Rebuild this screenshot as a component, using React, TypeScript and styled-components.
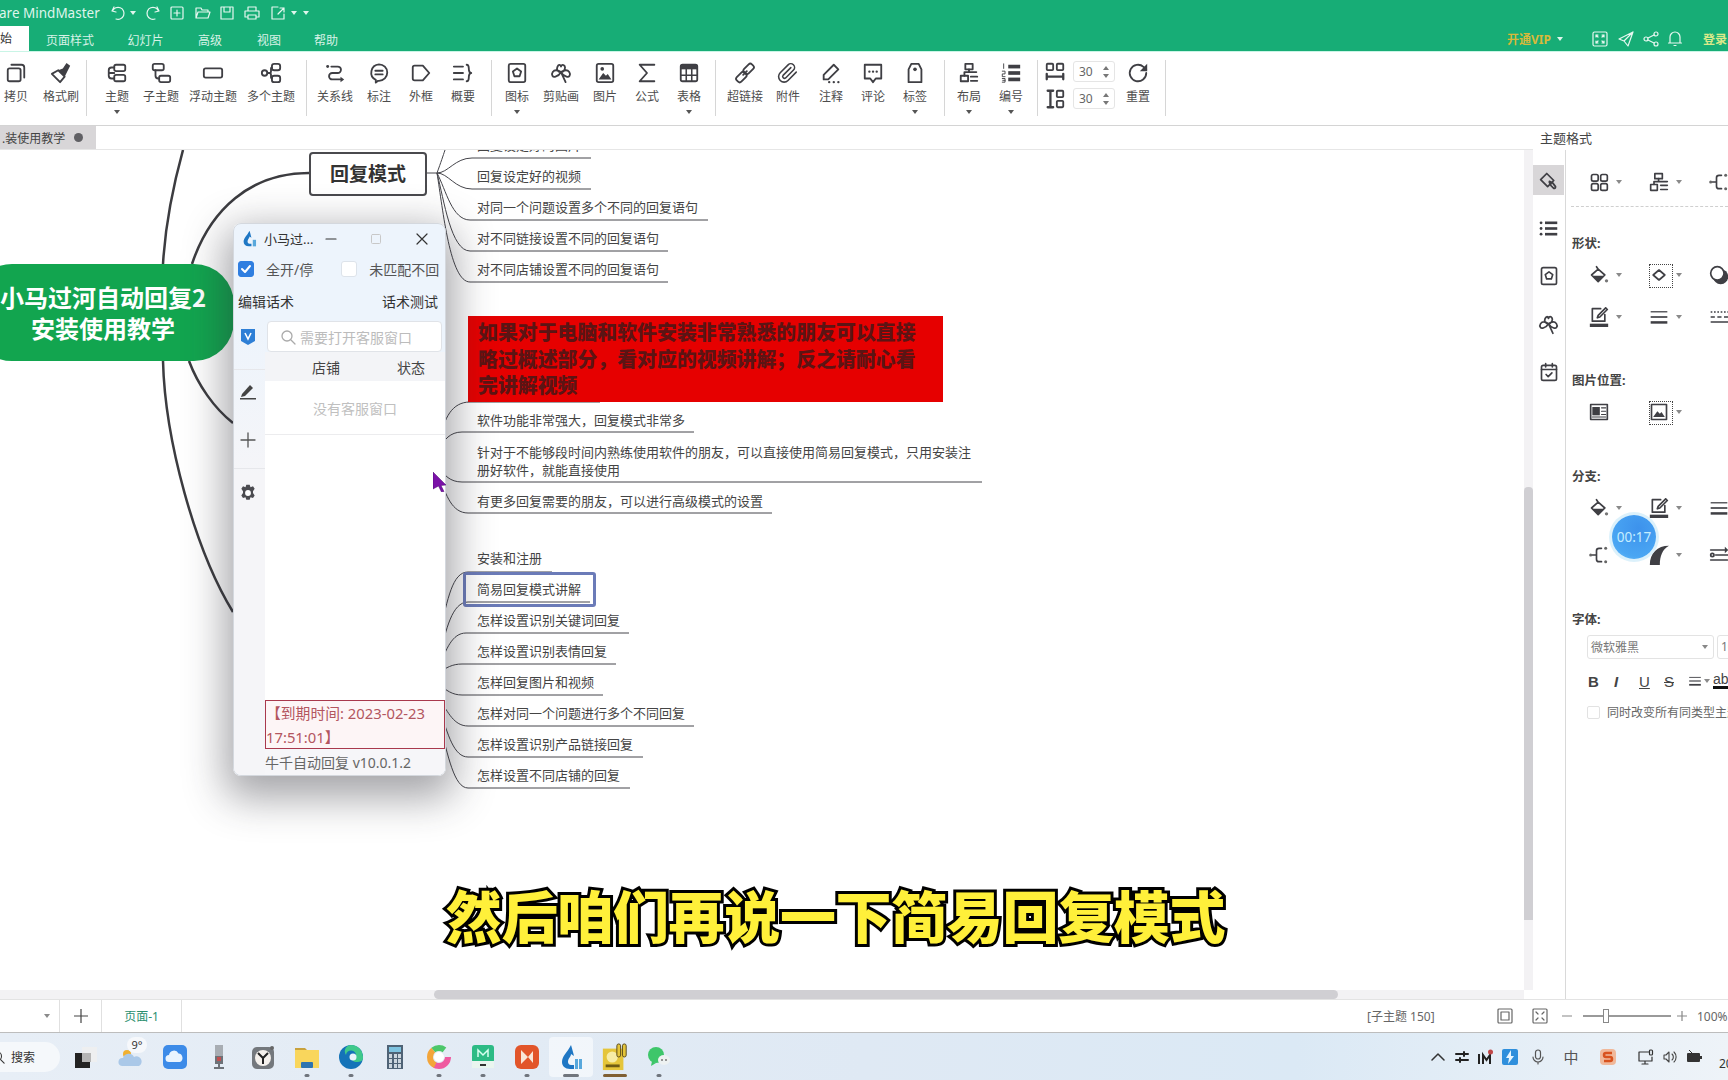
import React from "react";
import styled, { createGlobalStyle } from "styled-components";

const FONT = `"Noto Sans", "Noto Sans CJK SC", sans-serif`;
const INK = "#3f3f44";

const Global = createGlobalStyle`
  html, body { margin: 0; padding: 0; background: #fff; overflow: hidden; }
  * { box-sizing: border-box; }
  body { font-family: ${FONT}; }
`;

const Page = styled.div`
  width: 1728px; height: 1080px; display: flex; flex-direction: column; overflow: hidden; background: #fff;
`;

/* ------- icons ------- */
const Glyph = styled.svg<{ $s?: number; $c?: string; $w?: number }>`
  width: ${(p) => p.$s ?? 22}px; height: ${(p) => p.$s ?? 22}px; flex: none; display: block;
  fill: none; stroke: ${(p) => p.$c ?? INK}; stroke-width: ${(p) => p.$w ?? 2};
  stroke-linecap: round; stroke-linejoin: round;
`;
type IconProps = { s?: number; c?: string; w?: number };
const mk = (body: React.ReactNode) => ({ s, c, w }: IconProps) => (
  <Glyph viewBox="0 0 24 24" $s={s} $c={c} $w={w}>{body}</Glyph>
);
const Solid = styled.g<{ $c?: string }>`fill: ${(p) => p.$c ?? INK}; stroke: none;`;
const Icons = {
  copy: mk(<><rect x="3" y="7" width="14" height="14" rx="2" /><path d="M7 3h11a3 3 0 0 1 3 3v11" /></>),
  brush: mk(<><path d="M9 9l7 7-5 6-9-9z" /><Solid><path d="M9 9l5-2 4-6 4 3-3 6-3 6z" /></Solid></>),
  brushPanel: mk(<><path d="M3 11l7-7 8 8-7 7z" /><path d="M13 13l4 2 3 4a2 2 0 0 1-2 2l-3-3-2-4" /></>),
  topic: mk(<><rect x="9" y="3" width="12" height="7" rx="2" /><rect x="9" y="14" width="12" height="7" rx="2" /><path d="M9 6H6a3 3 0 0 0-3 3v6a3 3 0 0 0 3 3h3M3 12h6" /></>),
  sub: mk(<><rect x="3" y="2" width="12" height="7" rx="2" /><rect x="10" y="15" width="12" height="7" rx="2" /><path d="M6 9v6a3 3 0 0 0 3 3h1" /></>),
  float: mk(<rect x="2" y="7" width="20" height="10" rx="2" />),
  multi: mk(<><circle cx="5" cy="12" r="3" /><rect x="13" y="2" width="9" height="7" rx="2.5" /><rect x="13" y="15" width="9" height="7" rx="2.5" /><path d="M8 12h2a2 2 0 0 0 2-2V7a1 1 0 0 1 1-1M10 12a2 2 0 0 1 2 2v3a1 1 0 0 0 1 1" /></>),
  relation: mk(<><path d="M8 5h7a3.5 3.5 0 0 1 0 7H9a3.5 3.5 0 0 0 0 7h9" /><Solid><circle cx="4" cy="5" r="1.6" /><path d="M18 16l4 3-4 3z" /></Solid></>),
  callout: mk(<><path d="M12 2.5a9 9 0 0 1 0 18h-1l-2.500 2v-3A9 9 0 0 1 12 2.500z" /><path d="M8 9.500h8M8 13.500h8" /></>),
  frame: mk(<path d="M3 6a2 2 0 0 1 2-2h9l7 8-7 8H5a2 2 0 0 1-2-2z" />),
  summary: mk(<path d="M2 5h10M2 12h10M2 19h10M16 3c3 0 2 3 2.500 6s2.500 3 2.500 3-2 0-2.500 3 .5 6-2.500 6" />),
  star: mk(<><rect x="3" y="2" width="18" height="20" rx="2" /><path d="M12 7l4.500 3.300-1.700 5.200H9.200L7.500 10.300z" /></>),
  clover: mk(<path d="M12 11C8 11 7 8 8 5.500S11 2 12 5c1-3 3-2 4-.5S16 11 12 11zM12 11c-3-2-7-3-9 0s0 6 3 5 5-3 6-5zM12 11c3-2 7-3 9 0s0 6-3 5-5-3-6-5zM12 11l5 11" />),
  image: mk(<><rect x="3" y="2" width="18" height="20" rx="2" /><Solid><path d="M5 19l5-7 3 3 2-2 4 6z" /><circle cx="9" cy="7.500" r="2" /></Solid></>),
  sigma: mk(<path d="M20 3H4l8 9-8 9h16" />),
  table: mk(<><rect x="3" y="3" width="18" height="18" rx="2" /><Solid><rect x="3" y="3" width="18" height="5" /></Solid><path d="M3 14.500h18M9 8v13M15 8v13" strokeWidth="1.700" /></>),
  link: mk(<><rect x="12.500" y="1.500" width="7" height="12" rx="2.500" transform="rotate(45 16 7.500)" /><rect x="4.500" y="10.500" width="7" height="12" rx="2.500" transform="rotate(45 8 16.500)" /><path d="M10 14l4-4" /></>),
  clip: mk(<path d="m21 11-9 9.200a6 6 0 0 1-8.500-8.500l8.600-8.600A4 4 0 1 1 18 8.800l-8.600 8.600a2 2 0 0 1-2.800-2.800l8.500-8.500" strokeWidth="1.700" />),
  note: mk(<><path d="M15 3l5 5L9 19H4v-5z" /><path d="M10 22h.1M15 22h.1M20 22h.1" strokeWidth="2.500" /></>),
  comment: mk(<><path d="M3 3h18v15h-6l-3 4-3-4H3z" /><path d="M8 10.500h.1M12 10.500h.1M16 10.500h.1" strokeWidth="2.500" /></>),
  tag: mk(<><path d="M8 2h8l3 6v14H5V8z" /><Solid><circle cx="12" cy="8" r="2" /></Solid></>),
  layout: mk(<><rect x="8" y="2" width="8" height="6" /><rect x="3" y="15" width="8" height="6" /><path d="M12 8v3M7 15v-4h13M14 16h7M14 20.500h7" /></>),
  number: mk(<><Solid><rect x="9" y="3" width="13" height="4" /><rect x="9" y="10" width="13" height="4" /><rect x="9" y="17" width="13" height="4" /></Solid><path d="M4 2v5M2.500 10h3v3h-3v3h3M2.500 18h3v4h-3M3 20h2.500" strokeWidth="1" /></>),
  gapH: mk(<><rect x="3" y="3" width="7" height="7" rx="1" /><rect x="14" y="3" width="7" height="7" rx="1" /><path d="M3 14v6M21 14v6M3 17h18" strokeWidth="2.500" /></>),
  gapV: mk(<><rect x="14" y="3" width="7" height="7" rx="1" /><rect x="14" y="14" width="7" height="7" rx="1" /><path d="M4 3h6M4 21h6M7 3v18" strokeWidth="2.500" /></>),
  reset: mk(<><path d="M21 12a9 9 0 1 1-3-6.700L21 8" /><Solid><path d="M22 2v8h-8z" /></Solid></>),
  list: mk(<><Solid><rect x="8" y="4" width="14" height="3" /><rect x="8" y="10.500" width="14" height="3" /><rect x="8" y="17" width="14" height="3" /><circle cx="3.500" cy="5.500" r="1.600" /><circle cx="3.500" cy="12" r="1.600" /><circle cx="3.500" cy="18.500" r="1.600" /></Solid></>),
  calendar: mk(<><rect x="3" y="4" width="18" height="18" rx="2" /><path d="M3 9h18M8 2v4M16 2v4M8.500 15l2.500 2.500 4.500-4.500" /></>),
  grid4: mk(<><rect x="3" y="3" width="8" height="8" rx="2" /><rect x="14" y="3" width="8" height="8" rx="2" /><rect x="3" y="14" width="8" height="8" rx="2" /><rect x="14" y="14" width="8" height="8" rx="2" /></>),
  org: mk(<><rect x="7" y="2" width="9" height="6" /><rect x="2" y="15" width="8" height="7" /><path d="M11.500 8v3.500M6 15v-3.500h16M14 16h8M14 21h8" /></>),
  bracket: mk(<><path d="M4 12h5M15 4h-3a3 3 0 0 0-3 3v10a3 3 0 0 0 3 3h3" /><Solid $c="#666"><circle cx="2" cy="12" r="1.800" /><circle cx="20" cy="4" r="1.800" /><circle cx="20" cy="20" r="1.800" /></Solid></>),
  bucket: mk(<><path d="M9 2l2 3M3 12l8-7 8 7-8 8z" /><Solid><path d="M4 13h14l-7 7z" /></Solid><Solid $c="#777"><circle cx="21" cy="19" r="2" /></Solid></>),
  diamond: mk(<path d="M12 6l7 6-7 6-7-6z" />),
  shadow: mk(<><Solid><circle cx="14" cy="14" r="9" /></Solid><circle cx="10" cy="10" r="8" fill="#fff" /></>),
  penBox: mk(<><path d="M14 2H4v15h15V9" /><path d="M20 1l2 2-9 9-3 1 1-3z" /><Solid><rect x="1" y="20" width="22" height="4" /></Solid></>),
  lines: mk(<><Solid><rect x="2" y="5" width="20" height="1.500" /><rect x="2" y="11" width="20" height="2" /><rect x="2" y="17" width="20" height="3" /></Solid></>),
  dashes: mk(<path d="M2 6h2M6 6h2M10 6h2M14 6h2M18 6h2M22 6h1M2 12h5M10 12h5M18 12h5M2 18h22" strokeLinecap="butt" />),
  card: mk(<><rect x="2" y="3" width="20" height="18" /><Solid><rect x="4" y="6" width="9" height="10" /></Solid><path d="M15 7h5M15 11h5M15 15h5M4 18h16" strokeWidth="1.300" /></>),
  picture: mk(<><rect x="3" y="3" width="18" height="18" /><Solid><path d="M5 18l5-7 3 3 2-2 4 6z" /></Solid></>),
  arc: mk(<Solid><path d="M1 24C1 10 10 1 24 1 16 5 13 14 13 24z" /></Solid>),
  flow: mk(<><path d="M2 6h17M8 12h15M2 18h20" /><circle cx="4" cy="12" r="2" /><Solid><path d="M19 2l4 4-4 4z" /></Solid></>),
};

/* ------- title bar ------- */
const TitleBar = styled.header`
  height: 52px; background: #17ad76; border-bottom: 1px solid #c9f5e6; color: #d7f2e7; flex: none; display: flex; flex-direction: column;
`;
const QuickRow = styled.div`height: 26px; display: flex; align-items: center;`;
const AppName = styled.span`
  width: 111px; margin-left: -1px; font-size: 13.5px; color: #dff5ec; white-space: nowrap; flex: none;
`;
const Quick = styled.span<{ $w: number }>`
  width: ${(p) => p.$w}px; flex: none; display: flex; justify-content: center; align-items: center;
`;
const TinyCaret = styled.i<{ $c?: string }>`
  display: block; width: 0; height: 0; border: 3px solid transparent; border-top: 4px solid ${(p) => p.$c ?? "#8a8a8a"}; border-bottom: 0; flex: none;
`;
const TabRow = styled.nav`height: 25px; display: flex; align-items: center; padding-top: 0;`;
const HomeTab = styled.span`
  width: 29px; height: 25px; background: #fff; color: #333; font-size: 12px; line-height: 26px; flex: none;
`;
const MenuTab = styled.span<{ $w: number }>`
  width: ${(p) => p.$w}px; text-align: center; font-size: 12px; flex: none; padding-top: 2px;
`;
const RightCluster = styled.div`margin-left: auto; display: flex; align-items: center; height: 25px;`;
const Vip = styled.span`
  width: 58px; display: flex; align-items: center; gap: 6px; color: #d9b93a; font-weight: 700; font-size: 12px; white-space: nowrap;
`;
const Cell = styled.span<{ $w: number; $ml?: number }>`
  width: ${(p) => p.$w}px; margin-left: ${(p) => p.$ml ?? 0}px; flex: none; display: flex; justify-content: center;
`;
const Login = styled.span`
  margin-left: 15px; width: 25px; overflow: hidden; white-space: nowrap; color: #dbe98a; font-size: 12px; font-weight: 700;
`;

/* ------- ribbon ------- */
const Ribbon = styled.section`
  height: 74px; flex: none; display: flex; border-bottom: 1px solid #d4d4d4; background: #fff;
`;
const Tool = styled.div<{ $w: number; $ml?: number }>`
  width: ${(p) => p.$w}px; margin-left: ${(p) => p.$ml ?? 0}px; flex: none; display: flex; flex-direction: column; align-items: center; padding-top: 10px;
`;
const ToolLabel = styled.span`font-size: 12px; line-height: 16px; margin-top: 5px; color: #4d4d4d; white-space: nowrap;`;
const ToolCaret = styled.i`
  display: block; margin-top: 5px; width: 0; height: 0; border: 3px solid transparent; border-top: 4px solid #555; border-bottom: 0;
`;
const Sep = styled.i<{ $ml?: number; $mr?: number }>`
  width: 1px; height: 56px; margin: 8px ${(p) => p.$mr ?? 0}px 0 ${(p) => p.$ml ?? 0}px; background: #d6d6d6; flex: none; display: block;
`;
const SpacingBlock = styled.div`
  margin-left: 6px; width: 71px; padding-top: 9px; display: flex; flex-direction: column; gap: 6px; flex: none;
`;
const SpacingRow = styled.div`display: flex; align-items: center; gap: 7px; height: 21px;`;
const Spin = styled.div`
  width: 42px; height: 21px; border: 1px solid #e5e5e5; border-radius: 3px; display: flex; align-items: center; justify-content: space-between;
  padding: 0 5px; font-size: 12px; color: #666;
`;
const SpinArrows = styled.span`display: flex; flex-direction: column; gap: 4px;`;
const ArrowUp = styled.i`display: block; width: 0; height: 0; border: 3px solid transparent; border-bottom: 4px solid #777; border-top: 0;`;
const ArrowDown = styled.i`display: block; width: 0; height: 0; border: 3px solid transparent; border-top: 4px solid #777; border-bottom: 0;`;

/* ------- main ------- */
const Main = styled.main`height: 873px; flex: none; display: flex;`;
const LeftColumn = styled.div`width: 1533px; flex: none; display: flex; flex-direction: column;`;
const TabStrip = styled.div`height: 24px; flex: none; border-bottom: 1px solid #e6e6e6; display: flex;`;
const DocTab = styled.div`
  width: 96px; height: 23px; background: #d8d6d8; display: flex; align-items: center; font-size: 12px; color: #444; padding-left: 2px; gap: 9px; white-space: nowrap;
`;
const DirtyDot = styled.i`width: 9px; height: 9px; border-radius: 50%; background: #606064; display: block; flex: none;`;
const Body = styled.div`height: 840px; flex: none; display: flex;`;
const Canvas = styled.div`width: 1524px; flex: none; position: relative; overflow: hidden; background: #fff;`;
const VTrack = styled.div`width: 9px; flex: none; background: #f3f2f4; padding-top: 337px;`;
const VThumb = styled.div`height: 433px; background: #d0cfd3; border-radius: 4px 4px 0 0;`;
const HTrack = styled.div`height: 9px; width: 1524px; flex: none; background: #f3f2f4; padding-left: 434px;`;
const HThumb = styled.div`height: 9px; width: 904px; background: #d0cfd3; border-radius: 5px;`;

const Wires = styled.svg`position: absolute; left: 0; top: 0; width: 1524px; height: 840px; fill: none;`;
const RootNode = styled.div`
  position: absolute; left: -28px; top: 114px; width: 262px; height: 97px; border-radius: 40px; background: #12a54f; padding-bottom: 2px;
  color: #fff; font-weight: 700; font-size: 24px; line-height: 31px; text-align: center; display: flex; align-items: center; justify-content: center; font-family: "Noto Sans CJK SC", sans-serif;
`;
const MainTopic = styled.div`
  position: absolute; left: 309px; top: 2px; width: 118px; height: 44px; background: #fff; border: 2px solid #4a4a4e; border-radius: 4px; padding-bottom: 3px;
  font-weight: 700; font-size: 19px; color: #333; display: flex; align-items: center; justify-content: center;
`;
const Topic = styled.div<{ $y: number }>`
  position: absolute; left: 477px; top: ${(p) => p.$y - 150 - 11}px; line-height: 20px; font-size: 13px; color: #444; white-space: nowrap;
`;
const RedNote = styled.div`
  position: absolute; left: 468px; top: 166px; width: 475px; height: 86px; background: #e60000; padding: 4px 10px;
  font-size: 19.900px; line-height: 26.700px; font-weight: 900; color: #5b1414;
`;
const Selected = styled.div`
  position: absolute; left: 463px; top: 422px; width: 133px; height: 35px; border: 3px solid #6b7bb8; border-radius: 3px;
`;
const Cursor = styled.svg`position: absolute; left: 433px; top: 322px; width: 13px; height: 20px;`;
const Subtitle = styled.div`
  position: absolute; left: 446px; top: 729px; font-size: 56px; line-height: 70px; font-weight: 900; letter-spacing: -0.350px; white-space: nowrap;
  color: #fff03a; -webkit-text-stroke: 6px #000; paint-order: stroke fill; font-family: "Noto Sans CJK SC", sans-serif;
`;

/* ------- floating window ------- */
const Win = styled.section`
  position: absolute; left: 233px; top: 73px; width: 213px; height: 553px; border-radius: 8px; overflow: hidden;
  display: flex; flex-direction: column; background: #edf4fc; border: 1px solid #d4d8de;
`;
const WinShadow = styled.div`
  position: absolute; left: 233px; top: 73px; width: 213px; height: 553px; border-radius: 8px;
  box-shadow: 0 14px 40px 8px rgba(40, 40, 50, 0.42);
`;
const WinTitle = styled.div`height: 29px; display: flex; align-items: center; padding-left: 7px; font-size: 13px; color: #333; flex: none;`;
const WinName = styled.span`margin-left: 6px; width: 58px; white-space: nowrap;`;
const WinBtn = styled.span<{ $w: number }>`width: ${(p) => p.$w}px; display: flex; justify-content: center; flex: none;`;
const WinRow = styled.div<{ $h: number; $pb?: number }>`
  height: ${(p) => p.$h}px; padding: 0 7px ${(p) => p.$pb ?? 0}px 4px; display: flex; align-items: center; font-size: 14px; color: #444; flex: none;
`;
const Check = styled.span<{ $on?: boolean; $ml?: number }>`
  width: 16px; height: 16px; border-radius: 3px; flex: none; background: ${(p) => (p.$on ? "#2f7ee0" : "#fff")}; margin-left: ${(p) => p.$ml ?? 0}px;
  border: 1px solid ${(p) => (p.$on ? "#2f7ee0" : "#dde3ea")}; display: flex; align-items: center; justify-content: center;
`;
const CheckLabel = styled.span<{ $ml: number; $c?: string }>`margin-left: ${(p) => p.$ml}px; white-space: nowrap; color: ${(p) => p.$c ?? "#555"};`;
const Between = styled.span`margin-left: auto;`;
const WinBody = styled.div`flex: 1; display: flex; min-height: 0;`;
const WinSide = styled.aside`
  width: 31px; flex: none; display: flex; flex-direction: column; align-items: center; background: linear-gradient(#edf4fc, #f5f5f8 35%);
`;
const SideCell = styled.div<{ $h: number; $line?: boolean; $pt?: number; $pb?: number }>`
  width: 100%; height: ${(p) => p.$h}px; display: flex; align-items: center; justify-content: center; flex: none;
  padding: ${(p) => p.$pt ?? 0}px 4px ${(p) => p.$pb ?? 0}px 0;
  border-bottom: ${(p) => (p.$line ? "1px solid #e6e7eb" : "none")};
`;
const Pane = styled.div`flex: 1; display: flex; flex-direction: column; background: #fff; min-width: 0;`;
const SearchWrap = styled.div`height: 34px; padding: 3px 3px 0 2px; background: #edf4fc; flex: none;`;
const SearchBox = styled.div`
  height: 31px; background: #fff; border: 1px solid #e0e3e8; border-radius: 4px; display: flex; align-items: center; padding-left: 12px; gap: 4px; font-size: 14px; color: #bcbcbc; white-space: nowrap;
`;
const TableHead = styled.div`height: 29px; background: #f3f4f7; display: flex; align-items: center; font-size: 14px; color: #444; flex: none;`;
const HeadCol = styled.span<{ $w: number }>`width: ${(p) => p.$w}px; text-align: center; flex: none;`;
const EmptyRow = styled.div`height: 54px; display: flex; align-items: center; justify-content: center; border-bottom: 1px solid #ececee; color: #c0c0c0; font-size: 14px; flex: none;`;
const Grow = styled.div`flex: 1;`;
const Expiry = styled.div`
  height: 49px; width: 180px; border: 1px solid #a9394d; background: #fdf5f6; color: #b3565f; font-size: 14.800px; line-height: 24px; flex: none; overflow: hidden; white-space: nowrap;
`;
const WinFooter = styled.div`height: 26px; display: flex; align-items: center; font-size: 14px; color: #666; background: #f6f6f9; white-space: nowrap; flex: none;`;

/* ------- right panel ------- */
const Panel = styled.aside`width: 195px; flex: none; display: flex; flex-direction: column; overflow: hidden; position: relative; background: #fff;`;
const PanelHead = styled.div`height: 24px; flex: none; font-size: 13px; line-height: 24px; color: #444; padding-left: 7px; white-space: nowrap;`;
const PanelBody = styled.div`flex: 1; display: flex; min-height: 0;`;
const Rail = styled.div`
  width: 33px; flex: none; border-right: 1px solid #d9d9d9; padding-top: 15px; display: flex; flex-direction: column; gap: 18px;
`;
const RailItem = styled.div<{ $active?: boolean }>`
  width: 31px; height: 30px; display: flex; align-items: center; justify-content: center; background: ${(p) => (p.$active ? "#d8d6d8" : "transparent")};
`;
const PanelContent = styled.div`flex: 1; padding-left: 4px; min-width: 0;`;
const IconRow = styled.div<{ $mt: number }>`display: flex; height: 24px; margin-top: ${(p) => p.$mt}px; width: 200px;`;
const IconCell = styled.div<{ $dots?: boolean }>`
  width: 60px; flex: none; padding-left: 19px; display: flex; align-items: center; gap: 7px; position: relative;
  ${(p) => p.$dots && `&::before { content: ""; position: absolute; left: 19px; top: 1px; width: 22px; height: 22px; border: 1px dotted #444; }`}
`;
const Dashed = styled.div`margin: 12px 0 0 1px; border-top: 1px dashed #cfcfcf;`;
const SectionLabel = styled.div<{ $mt: number }>`
  height: 18px; line-height: 18px; margin-top: ${(p) => p.$mt}px; padding-left: 2px; font-size: 12.500px; font-weight: 700; color: #444;
`;
const SelectRow = styled.div`display: flex; gap: 3px; margin: 6px 0 0 17px; width: 200px;`;
const FontSelect = styled.div`
  width: 127px; height: 24px; border: 1px solid #e3e3e3; border-radius: 3px; display: flex; align-items: center; justify-content: space-between; padding: 0 5px 0 3px; font-size: 12px; color: #777; flex: none;
`;
const SizeSelect = styled.div`
  width: 30px; height: 24px; border: 1px solid #e3e3e3; border-radius: 3px; font-size: 12px; color: #777; line-height: 22px; padding-left: 3px; flex: none;
`;
const FormatRow = styled.div`display: flex; align-items: center; margin: 10px 0 0 18px; height: 24px; width: 200px; color: #444; font-size: 15px;`;
const Fmt = styled.span<{ $w: number; $b?: boolean; $i?: boolean; $u?: boolean; $s?: boolean }>`
  width: ${(p) => p.$w}px; flex: none; display: flex; align-items: center; gap: 2px;
  font-weight: ${(p) => (p.$b ? 700 : 400)}; font-style: ${(p) => (p.$i ? "italic" : "normal")};
  text-decoration: ${(p) => (p.$u ? "underline" : p.$s ? "line-through" : "none")}; font-family: "Liberation Sans", sans-serif;
`;
const AbMark = styled.span`border-bottom: 3px solid #111; line-height: 13px; font-size: 14px;`;
const SyncRow = styled.div`display: flex; align-items: center; margin: 10px 0 0 17px; gap: 7px; font-size: 12px; color: #666; white-space: nowrap; width: 200px;`;
const SyncBox = styled.i`display: block; width: 13px; height: 13px; border: 1px solid #e2e2e2; border-radius: 2px; flex: none;`;
const Timer = styled.div`
  position: absolute; left: 79px; top: 389px; width: 44px; height: 44px; border-radius: 50%; color: #c5eeff; font-size: 13.500px;
  background: radial-gradient(circle at 60% 30%, #3d92ec, #4aa6f3 70%, #6fc2f8); box-shadow: 0 0 0 3px rgba(205, 235, 250, 0.7);
  display: flex; align-items: center; justify-content: center;
`;

/* ------- status bar ------- */
const StatusBar = styled.footer`
  height: 34px; flex: none; border-top: 1px solid #e3e3e3; border-bottom: 1px solid #bdbdbd; display: flex; align-items: center; background: #fff; font-size: 12px; color: #666;
`;
const StatusCell = styled.span<{ $w: number; $line?: boolean; $c?: string; $end?: boolean }>`
  width: ${(p) => p.$w}px; height: 32px; flex: none; display: flex; align-items: center; justify-content: ${(p) => (p.$end ? "flex-end" : "center")};
  padding-right: ${(p) => (p.$end ? 9 : 0)}px;
  border-right: ${(p) => (p.$line ? "1px solid #e0e0e0" : "none")}; color: ${(p) => p.$c ?? "inherit"};
`;
const StatusRight = styled.div`margin-left: auto; display: flex; align-items: center; height: 32px;`;
const StatusText = styled.span`width: 130px; white-space: nowrap; font-size: 12px; flex: none;`;
const Slider = styled.div`width: 88px; height: 2px; background: #9a9a9a; position: relative; margin: 0 6px 0 6px; flex: none;`;
const SliderKnob = styled.i`position: absolute; left: 20px; top: -6px; width: 6px; height: 14px; border: 1px solid #888; background: #fff; display: block;`;
const Percent = styled.span`margin-left: 10px; width: 31px; white-space: nowrap; overflow: hidden; font-size: 12px; flex: none;`;

/* ------- taskbar ------- */
const Taskbar = styled.footer`
  height: 47px; flex: none; display: flex; align-items: center; background: linear-gradient(90deg, #e7eef6, #dfe9f4 50%, #dbe9f5 75%, #eef3f8);
`;
const SearchPill = styled.div`
  margin-left: -20px; width: 80px; height: 30px; border-radius: 15px; background: #f5f8fb; display: flex; align-items: center; gap: 6px; padding-left: 11px; font-size: 12px; color: #333; flex: none;
`;
const Slot = styled.div<{ $w?: number; $ml?: number; $mark?: "dot" | "bar" | "brown"; $active?: boolean }>`
  width: ${(p) => p.$w ?? 44}px; margin-left: ${(p) => p.$ml ?? 0}px; height: 40px; flex: none; position: relative; display: flex; align-items: center; justify-content: center; border-radius: 4px;
  background: ${(p) => (p.$active ? "rgba(255,255,255,.55)" : "transparent")};
  ${(p) =>
    p.$mark
      ? `&::after { content: ""; position: absolute; bottom: 0; left: 50%; transform: translateX(-50%); height: 3px; border-radius: 2px;
          width: ${p.$mark === "dot" ? 5 : p.$mark === "bar" ? 16 : 24}px; background: ${p.$mark === "brown" ? "#7f5f33" : "#70757d"}; }`
      : ""}
`;
const TempBadge = styled.span`
  position: absolute; right: 6px; top: 0; width: 20px; height: 16px; border-radius: 8px; background: #f6f8fb; font-size: 11px; line-height: 16px; text-align: center; color: #333;
`;
const Tray = styled.div`margin-left: auto; display: flex; align-items: center; height: 47px;`;
const TrayCell = styled.div<{ $w: number }>`width: ${(p) => p.$w}px; flex: none; display: flex; justify-content: center; align-items: center;`;
const Clock = styled.span`width: 9px; margin-left: 10px; margin-top: 14px; font-size: 12px; color: #333; white-space: nowrap; flex: none;`;
const TaskSvg = styled.svg<{ $s?: number }>`width: ${(p) => p.$s ?? 26}px; height: ${(p) => p.$s ?? 26}px; display: block; flex: none;`;
const ImeChar = styled.span`font-size: 15px; color: #555;`;

/* ------- data ------- */
type Item =
  | { t: "tool"; label: string; w: number; ml?: number; icon: keyof typeof Icons; caret?: boolean }
  | { t: "sep"; ml?: number; mr?: number }
  | { t: "spacing" };

const ribbon: Item[] = [
  { t: "tool", label: "拷贝", w: 44, ml: -6, icon: "copy" },
  { t: "tool", label: "格式刷", w: 46, icon: "brush" },
  { t: "sep", ml: 2, mr: 10 },
  { t: "tool", label: "主题", w: 40, icon: "topic", caret: true },
  { t: "tool", label: "子主题", w: 48, icon: "sub" },
  { t: "tool", label: "浮动主题", w: 56, icon: "float" },
  { t: "tool", label: "多个主题", w: 60, icon: "multi" },
  { t: "sep", ml: 5, mr: 8 },
  { t: "tool", label: "关系线", w: 40, icon: "relation" },
  { t: "tool", label: "标注", w: 48, icon: "callout" },
  { t: "tool", label: "外框", w: 36, icon: "frame" },
  { t: "tool", label: "概要", w: 48, icon: "summary" },
  { t: "sep", ml: 4, mr: 5 },
  { t: "tool", label: "图标", w: 40, icon: "star", caret: true },
  { t: "tool", label: "剪贴画", w: 48, icon: "clover" },
  { t: "tool", label: "图片", w: 40, icon: "image" },
  { t: "tool", label: "公式", w: 44, icon: "sigma" },
  { t: "tool", label: "表格", w: 40, icon: "table", caret: true },
  { t: "sep", ml: 6, mr: 7 },
  { t: "tool", label: "超链接", w: 44, icon: "link" },
  { t: "tool", label: "附件", w: 42, icon: "clip" },
  { t: "tool", label: "注释", w: 44, icon: "note" },
  { t: "tool", label: "评论", w: 40, icon: "comment" },
  { t: "tool", label: "标签", w: 44, icon: "tag", caret: true },
  { t: "sep", ml: 7, mr: 2 },
  { t: "tool", label: "布局", w: 44, icon: "layout", caret: true },
  { t: "tool", label: "编号", w: 40, icon: "number", caret: true },
  { t: "sep", ml: 6 },
  { t: "spacing" },
  { t: "tool", label: "重置", w: 40, ml: 3, icon: "reset" },
  { t: "sep", ml: 7 },
];

const topics: [string, number][] = [
  ["回复设定好的图片", 146],
  ["回复设定好的视频", 177],
  ["对同一个问题设置多个不同的回复语句", 208],
  ["对不同链接设置不同的回复语句", 239],
  ["对不同店铺设置不同的回复语句", 270],
  ["软件功能非常强大，回复模式非常多", 421],
  ["有更多回复需要的朋友，可以进行高级模式的设置", 502],
  ["安装和注册", 559],
  ["简易回复模式讲解", 590],
  ["怎样设置识别关键词回复", 621],
  ["怎样设置识别表情回复", 652],
  ["怎样回复图片和视频", 683],
  ["怎样对同一个问题进行多个不同回复", 714],
  ["怎样设置识别产品链接回复", 745],
  ["怎样设置不同店铺的回复", 776],
];

const thin = [
  "M426 23H437",
  "M437 23C441 12 443 6 445 0",
  "M437 23C448 23 455 8 472 8H591",
  "M437 23C448 23 455 39 472 39H591",
  "M437 23C446 40 452 70 470 70H708",
  "M437 23C444 50 451 101 470 101H668",
  "M437 23C443 60 450 132 470 132H668",
  "M440 290C444 268 452 252 470 252H600",
  "M440 298C444 290 450 282 462 282H694",
  "M440 318C444 325 450 332 462 332H982",
  "M440 328C446 345 452 363 468 363H772",
  "M440 480C448 450 452 422 468 422H552",
  "M440 505C446 480 452 452 468 452H590",
  "M440 515C446 500 452 483 466 483H629",
  "M440 522C446 518 452 514 462 514H616",
  "M440 535C446 540 452 545 462 545H603",
  "M440 550C448 562 454 576 468 576H694",
  "M440 560C448 585 454 607 468 607H643",
  "M440 575C448 605 454 638 468 638H630",
];
const thick = [
  "M183 0C172 40 165 80 163 114",
  "M163 211C165 290 195 400 233 462",
  "M309 23C250 23 210 60 192 114",
  "M189 211C198 235 214 258 233 273",
];

const railIcons: { k: keyof typeof Icons; s: number }[] = [
  { k: "brushPanel", s: 21 },
  { k: "list", s: 21 },
  { k: "star", s: 20 },
  { k: "clover", s: 21 },
  { k: "calendar", s: 20 },
];

const PCell = ({ k, s = 20, dots, caret = true }: { k: keyof typeof Icons; s?: number; dots?: boolean; caret?: boolean }) => {
  const G = Icons[k];
  return (
    <IconCell $dots={dots}>
      <G s={s} />
      {caret && <TinyCaret />}
    </IconCell>
  );
};

/* ------- taskbar art ------- */
const Files = () => (
  <TaskSvg viewBox="0 0 26 26"><rect x="2" y="9" width="15" height="15" fill="#222" /><rect x="9" y="9" width="9" height="9" fill="#bdbdbd" /><rect x="9" y="3" width="15" height="15" fill="#eee" opacity=".85" /><rect x="9" y="9" width="9" height="9" fill="#b5b5b5" /></TaskSvg>
);
const Weather = () => (
  <TaskSvg viewBox="0 0 26 26"><circle cx="9" cy="10" r="4" fill="#f0b030" /><path d="M4 22a4 4 0 0 1 1-8 6 6 0 0 1 11-1 5 5 0 0 1 5 9z" fill="#aac8e8" /></TaskSvg>
);
const Cloud = () => (
  <TaskSvg viewBox="0 0 26 26"><rect x="1" y="1" width="24" height="24" rx="5" fill="#3d8be8" /><path d="M7 18a3.500 3.500 0 0 1 0-7 5 5 0 0 1 9.500-1.500A4.500 4.500 0 0 1 18 18z" fill="#eaf4fe" /></TaskSvg>
);
const Mic = () => (
  <TaskSvg viewBox="0 0 26 26"><rect x="9" y="1" width="8" height="12" fill="#a8adb3" /><rect x="9" y="12" width="8" height="8" fill="#6d7278" /><rect x="11" y="13" width="4" height="4" fill="#c25050" /><rect x="12" y="20" width="2" height="3" fill="#6d7278" /><rect x="8" y="23" width="10" height="2" fill="#6d7278" /></TaskSvg>
);
const AlarmClock = () => (
  <TaskSvg viewBox="0 0 26 26"><rect x="2" y="3" width="22" height="22" rx="5" fill="#74787d" /><circle cx="13" cy="14" r="8" fill="#f4f0ec" /><path d="M8 9l5 5 5-5M13 14v6" stroke="#222" strokeWidth="2" fill="none" /><circle cx="22" cy="4" r="2" fill="#666" /></TaskSvg>
);
const Folder = () => (
  <TaskSvg viewBox="0 0 26 26"><path d="M1 4h10l3 3H1z" fill="#c9a23c" /><rect x="1" y="6" width="24" height="18" fill="#f9d65c" /><rect x="7" y="18" width="12" height="6" rx="1" fill="#2e74b0" /></TaskSvg>
);
const Edge = () => (
  <TaskSvg viewBox="0 0 26 26"><circle cx="13" cy="13" r="12" fill="#1473b8" /><path d="M13 1a12 12 0 0 1 12 13c0 3-3 4-6 4-4 0-5-2-5-3 2 0 4-1 4-3a5 5 0 0 0-10-1C5 7 8 1 13 1z" fill="#3fc98a" /><circle cx="15" cy="13" r="3.500" fill="#e8f4fa" /></TaskSvg>
);
const Calc = () => (
  <TaskSvg viewBox="0 0 26 26"><rect x="5" y="1" width="16" height="24" fill="#4f6376" /><rect x="7" y="3" width="12" height="5" fill="#7ec3e0" />{[10, 15, 20].map((y) => [7, 12, 16].map((x) => <rect key={`${x}${y}`} x={x} y={y} width="3" height="4" fill="#ccd6de" />))}</TaskSvg>
);
const Ring = () => (
  <TaskSvg viewBox="0 0 26 26"><circle cx="13" cy="13" r="9" fill="none" stroke="#ef5aa0" strokeWidth="6" strokeDasharray="20 40" /><circle cx="13" cy="13" r="9" fill="none" stroke="#f3a53a" strokeWidth="6" strokeDasharray="18 40" strokeDashoffset="-18" /><circle cx="13" cy="13" r="9" fill="none" stroke="#4cc76a" strokeWidth="6" strokeDasharray="12 40" strokeDashoffset="-36" /><circle cx="13" cy="13" r="5" fill="#fff" /></TaskSvg>
);
const MindApp = () => (
  <TaskSvg viewBox="0 0 26 26"><rect x="2" y="1" width="22" height="18" rx="3" fill="#2dbb85" /><path d="M2 17h22v7H2z" fill="#eaf5ef" /><path d="M8 13V6l5 5 5-5v7" stroke="#d8fff0" strokeWidth="1.500" fill="none" /><rect x="10" y="20" width="6" height="2" fill="#333" /></TaskSvg>
);
const Orange = () => (
  <TaskSvg viewBox="0 0 26 26"><rect x="1" y="1" width="24" height="24" rx="6" fill="#e2552a" /><path d="M7 6l7 7-7 7zM19 7l-5 6 5 6z" fill="#f9e6d8" /></TaskSvg>
);
const Drop = () => (
  <TaskSvg viewBox="0 0 26 26"><path d="M13 1C9 9 4 12 4 18c0 4 3 7 8 7h4v-4h-3c-2 0-3-2-3-3 0-4 3-5 3-8l3 2C15 8 14 4 13 1z" fill="#1f77c4" /><rect x="17" y="15" width="3" height="10" fill="#58a8dc" /><rect x="21" y="15" width="3" height="10" fill="#58a8dc" /></TaskSvg>
);
const Player = () => (
  <TaskSvg viewBox="0 0 28 30" $s={28}><rect x="1" y="6" width="22" height="23" fill="#e5c53a" /><circle cx="11" cy="15" r="6" fill="#f7eca6" /><rect x="16" y="1" width="4" height="14" rx="2" fill="#e5c53a" stroke="#55461a" /><rect x="22" y="1" width="4" height="14" rx="2" fill="#e5c53a" stroke="#55461a" /><rect x="4" y="23" width="15" height="3" fill="#6d5a14" /></TaskSvg>
);
const Wechat = () => (
  <TaskSvg viewBox="0 0 26 26"><ellipse cx="10" cy="11" rx="8" ry="8" fill="#3ec66a" /><path d="M6 17l-1 5 5-3z" fill="#3ec66a" /><ellipse cx="18" cy="16" rx="6" ry="5" fill="#eef2f2" /><circle cx="16" cy="16" r="1" fill="#777" /><circle cx="20" cy="16" r="1" fill="#777" /></TaskSvg>
);

const Stroke = styled.svg<{ $c: string; $w?: number; $s?: number }>`
  width: ${(p) => p.$s ?? 16}px; height: ${(p) => p.$s ?? 16}px; fill: none; stroke: ${(p) => p.$c}; stroke-width: ${(p) => p.$w ?? 1.2}; display: block; flex: none; stroke-linecap: round; stroke-linejoin: round;
`;

export default function App() {
  return (
    <Page>
      <Global />
      <TitleBar>
        <QuickRow>
          <AppName>are MindMaster</AppName>
          <Quick $w={16}><Stroke $c="#e6f7f0" viewBox="0 0 16 16"><path d="M4 2L2 6l4 1M2.500 6A6 6 0 1 1 6 14" /></Stroke></Quick>
          <Quick $w={14}><TinyCaret $c="#dff5ec" /></Quick>
          <Quick $w={26}><Stroke $c="#e6f7f0" viewBox="0 0 16 16"><path d="M12 2l2 4-4 1M13.500 6A6 6 0 1 0 10 14" /></Stroke></Quick>
          <Quick $w={22}><Stroke $c="#e6f7f0" viewBox="0 0 16 16"><rect x="2" y="2" width="12" height="12" rx="1" /><path d="M8 5v6M5 8h6" /></Stroke></Quick>
          <Quick $w={30}><Stroke $c="#e6f7f0" viewBox="0 0 16 16"><path d="M1 13V3h5l1 2h6v2M1 13l2-6h12l-2 6z" /></Stroke></Quick>
          <Quick $w={18}><Stroke $c="#e6f7f0" viewBox="0 0 16 16"><path d="M2 2h12v12H2zM5 2v5h6V2" /></Stroke></Quick>
          <Quick $w={32}><Stroke $c="#e6f7f0" viewBox="0 0 16 16"><path d="M4 6V2h8v4M4 12H1V6h14v6h-3M4 10h8v4H4z" /></Stroke></Quick>
          <Quick $w={20}><Stroke $c="#e6f7f0" viewBox="0 0 16 16"><path d="M14 9v5H2V2h6M8 9l6-6M10 3h4v4" /></Stroke></Quick>
          <Quick $w={12}><TinyCaret $c="#dff5ec" /></Quick>
          <Quick $w={12}><TinyCaret $c="#dff5ec" /></Quick>
        </QuickRow>
        <TabRow>
          <HomeTab>始</HomeTab>
          <MenuTab $w={82}>页面样式</MenuTab>
          <MenuTab $w={69}>幻灯片</MenuTab>
          <MenuTab $w={60}>高级</MenuTab>
          <MenuTab $w={58}>视图</MenuTab>
          <MenuTab $w={56}>帮助</MenuTab>
          <RightCluster>
            <Vip>开通VIP<TinyCaret $c="#dff5ec" /></Vip>
            <Cell $w={24} $ml={23}><Stroke $c="#e6f7f0" viewBox="0 0 16 16"><rect x="1" y="1" width="14" height="14" rx="1.500" /><path d="M4 4l2 2M4 4h2M4 4v2M12 4l-2 2M12 4h-2M12 4v2M4 12l2-2M4 12h2M4 12v-2M12 12l-2-2M12 12h-2M12 12v-2" /></Stroke></Cell>
            <Cell $w={28}><Stroke $c="#e6f7f0" viewBox="0 0 16 16"><path d="M15 1L1 8l5 2 9-9-5 14-4-5" /></Stroke></Cell>
            <Cell $w={22}><Stroke $c="#e6f7f0" viewBox="0 0 16 16"><circle cx="3" cy="8" r="2" /><circle cx="13" cy="3" r="2" /><circle cx="13" cy="13" r="2" /><path d="M5 7l6-3M5 9l6 3" /></Stroke></Cell>
            <Cell $w={26}><Stroke $c="#e6f7f0" viewBox="0 0 16 16"><path d="M3 12V6a5 5 0 0 1 10 0v6zM1.500 12h13M7 14.500h2" /></Stroke></Cell>
            <Login>登录</Login>
          </RightCluster>
        </TabRow>
      </TitleBar>

      <Ribbon>
        {ribbon.map((it, i) => {
          if (it.t === "sep") return <Sep key={i} $ml={it.ml} $mr={it.mr} />;
          if (it.t === "spacing")
            return (
              <SpacingBlock key={i}>
                <SpacingRow><Icons.gapH s={22} /><Spin>30<SpinArrows><ArrowUp /><ArrowDown /></SpinArrows></Spin></SpacingRow>
                <SpacingRow><Icons.gapV s={22} /><Spin>30<SpinArrows><ArrowUp /><ArrowDown /></SpinArrows></Spin></SpacingRow>
              </SpacingBlock>
            );
          const G = Icons[it.icon];
          return (
            <Tool key={i} $w={it.w} $ml={it.ml}>
              <G />
              <ToolLabel>{it.label}</ToolLabel>
              {it.caret && <ToolCaret />}
            </Tool>
          );
        })}
      </Ribbon>

      <Main>
        <LeftColumn>
          <TabStrip>
            <DocTab>.装使用教学<DirtyDot /></DocTab>
          </TabStrip>
          <Body>
            <Canvas>
              <Wires viewBox="0 0 1524 840">
                {thick.map((d) => <path key={d} d={d} stroke="#3c3c40" strokeWidth="2.500" />)}
                {thin.map((d) => <path key={d} d={d} stroke="#44444a" strokeWidth="1" />)}
              </Wires>
              <RootNode><span>小马过河自动回复2<br />安装使用教学</span></RootNode>
              <MainTopic>回复模式</MainTopic>
              {topics.map(([t, y]) => <Topic key={t} $y={y}>{t}</Topic>)}
              <Topic $y={453}>针对于不能够段时间内熟练使用软件的朋友，可以直接使用简易回复模式，只用安装注</Topic>
              <Topic $y={471}>册好软件，就能直接使用</Topic>
              <RedNote>如果对于电脑和软件安装非常熟悉的朋友可以直接<br />略过概述部分，看对应的视频讲解；反之请耐心看<br />完讲解视频</RedNote>
              <Selected />
              <WinShadow />
              <Win>
                <WinTitle>
                  <TaskSvg viewBox="0 0 26 26" $s={17}><path d="M13 1C9 9 4 12 4 18c0 4 3 7 8 7h4v-4h-3c-2 0-3-2-3-3 0-4 3-5 3-8l3 2C15 8 14 4 13 1z" fill="#1f77c4" /><rect x="18" y="15" width="5" height="10" fill="#58a8dc" /></TaskSvg>
                  <WinName>小马过...</WinName>
                  <WinBtn $w={18}><Stroke $c="#333" $s={12} viewBox="0 0 12 12"><path d="M1 6h10" /></Stroke></WinBtn>
                  <WinBtn $w={72}><Stroke $c="#c8c8c8" $w={1} $s={12} viewBox="0 0 12 12"><rect x="1.500" y="1.500" width="9" height="9" rx="1" /></Stroke></WinBtn>
                  <WinBtn $w={20}><Stroke $c="#333" $s={12} viewBox="0 0 12 12"><path d="M1 1l10 10M11 1L1 11" /></Stroke></WinBtn>
                </WinTitle>
                <WinRow $h={32}>
                  <Check $on><Stroke $c="#fff" $w={2} $s={12} viewBox="0 0 12 12"><path d="M2 6l3 3 5-6" /></Stroke></Check>
                  <CheckLabel $ml={12}>全开/停</CheckLabel>
                  <Check $ml={28} />
                  <CheckLabel $ml={12}>未匹配不回</CheckLabel>
                </WinRow>
                <WinRow $h={33} $pb={2}>
                  <CheckLabel $ml={0} $c="#333">编辑话术</CheckLabel>
                  <Between><CheckLabel $ml={0} $c="#333">话术测试</CheckLabel></Between>
                </WinRow>
                <WinBody>
                  <WinSide>
                    <SideCell $h={52} $line $pb={14}>
                      <TaskSvg viewBox="0 0 16 18" $s={18}><path d="M1 1h14v12l-7 4-7-4z" fill="#2e7fd6" /><path d="M5 5l3 6 3-6" stroke="#fff" strokeWidth="1.600" fill="none" /></TaskSvg>
                    </SideCell>
                    <SideCell $h={42}>
                      <TaskSvg viewBox="0 0 18 18" $s={18}><path d="M3 12l8-9 3 3-8 8-4 1z" fill="#444" /><rect x="1" y="16" width="16" height="1.500" fill="#444" /></TaskSvg>
                    </SideCell>
                    <SideCell $h={57} $line>
                      <Stroke $c="#555" $w={1.3} viewBox="0 0 16 16"><path d="M8 1v14M1 8h14" /></Stroke>
                    </SideCell>
                    <SideCell $h={42} $pt={6}>
                      <TaskSvg viewBox="0 0 24 24" $s={20}><path d="M10 2h4l1 3 3-1 2 3-2 3v2l2 3-2 3-3-1-1 3h-4l-1-3-3 1-2-3 2-3v-2L4 7l2-3 3 1z" fill="#4b4b50" /><circle cx="12" cy="12" r="3.500" fill="#fff" /></TaskSvg>
                    </SideCell>
                  </WinSide>
                  <Pane>
                    <SearchWrap>
                      <SearchBox>
                        <Stroke $c="#aaa" $w={1.3} viewBox="0 0 16 16"><circle cx="7" cy="7" r="5" /><path d="M11 11l4 4" /></Stroke>
                        需要打开客服窗口
                      </SearchBox>
                    </SearchWrap>
                    <TableHead><HeadCol $w={122}>店铺</HeadCol><HeadCol $w={48}>状态</HeadCol></TableHead>
                    <EmptyRow>没有客服窗口</EmptyRow>
                    <Grow />
                    <Expiry>【到期时间: 2023-02-23<br />17:51:01】</Expiry>
                    <WinFooter>牛千自动回复 v10.0.1.2</WinFooter>
                  </Pane>
                </WinBody>
              </Win>
              <Cursor viewBox="0 0 13 20"><path d="M0 0l13 13-5 .5 3 6-2.500 .5-3-6L0 17z" fill="#7b12a8" stroke="#4b0a70" strokeWidth=".5" /></Cursor>
              <Subtitle>然后咱们再说一下简易回复模式</Subtitle>
            </Canvas>
            <VTrack><VThumb /></VTrack>
          </Body>
          <HTrack><HThumb /></HTrack>
        </LeftColumn>

        <Panel>
          <PanelHead>主题格式</PanelHead>
          <PanelBody>
            <Rail>
              {railIcons.map(({ k, s }, i) => {
                const G = Icons[k];
                return <RailItem key={k} $active={i === 0}><G s={s} /></RailItem>;
              })}
            </Rail>
            <PanelContent>
              <IconRow $mt={20}><PCell k="grid4" /><PCell k="org" /><PCell k="bracket" /></IconRow>
              <Dashed />
              <SectionLabel $mt={28}>形状:</SectionLabel>
              <IconRow $mt={10}><PCell k="bucket" /><PCell k="diamond" dots /><PCell k="shadow" /></IconRow>
              <IconRow $mt={18}><PCell k="penBox" /><PCell k="lines" /><PCell k="dashes" /></IconRow>
              <SectionLabel $mt={43}>图片位置:</SectionLabel>
              <IconRow $mt={10}><PCell k="card" caret={false} /><PCell k="picture" dots /></IconRow>
              <SectionLabel $mt={44}>分支:</SectionLabel>
              <IconRow $mt={10}><PCell k="bucket" /><PCell k="penBox" /><PCell k="lines" /></IconRow>
              <IconRow $mt={23}><PCell k="bracket" caret={false} /><PCell k="arc" /><PCell k="flow" /></IconRow>
              <SectionLabel $mt={44}>字体:</SectionLabel>
              <SelectRow>
                <FontSelect>微软雅黑<TinyCaret $c="#888" /></FontSelect>
                <SizeSelect>10</SizeSelect>
              </SelectRow>
              <FormatRow>
                <Fmt $w={26} $b>B</Fmt>
                <Fmt $w={25} $i $b>I</Fmt>
                <Fmt $w={25} $u>U</Fmt>
                <Fmt $w={24} $s>S</Fmt>
                <Fmt $w={25}><Icons.lines s={14} /><TinyCaret /></Fmt>
                <Fmt $w={20}><AbMark>ab</AbMark></Fmt>
              </FormatRow>
              <SyncRow><SyncBox />同时改变所有同类型主题</SyncRow>
            </PanelContent>
          </PanelBody>
          <Timer>00:17</Timer>
        </Panel>
      </Main>

      <StatusBar>
        <StatusCell $w={60} $line $end><TinyCaret /></StatusCell>
        <StatusCell $w={42} $line><Stroke $c="#444" $s={14} viewBox="0 0 14 14"><path d="M7 0v14M0 7h14" /></Stroke></StatusCell>
        <StatusCell $w={80} $line $c="#2a8f6f">页面-1</StatusCell>
        <StatusRight>
          <StatusText>[子主题 150]</StatusText>
          <Stroke $c="#666" viewBox="0 0 16 16"><rect x="1" y="1" width="14" height="14" rx="1" /><rect x="4" y="4" width="8" height="8" /></Stroke>
          <Cell $w={35} $ml={9}><Stroke $c="#666" viewBox="0 0 16 16"><rect x="1" y="1" width="14" height="14" rx="1" /><path d="M4 4l2 2M12 4l-2 2M4 12l2-2M12 12l-2-2" /></Stroke></Cell>
          <Cell $w={20}><Stroke $c="#888" $s={10} viewBox="0 0 10 10"><path d="M0 5h10" /></Stroke></Cell>
          <Slider><SliderKnob /></Slider>
          <Stroke $c="#888" $s={10} viewBox="0 0 10 10"><path d="M0 5h10M5 0v10" /></Stroke>
          <Percent>100%</Percent>
        </StatusRight>
      </StatusBar>

      <Taskbar>
        <SearchPill>
          <Stroke $c="#333" $s={14} viewBox="0 0 16 16"><circle cx="7" cy="7" r="5" /><path d="M11 11l4 4" /></Stroke>
          搜索
        </SearchPill>
        <Slot $w={48} $ml={2}><Files /></Slot>
        <Slot $ml={-1}><Weather /><TempBadge>9°</TempBadge></Slot>
        <Slot><Cloud /></Slot>
        <Slot><Mic /></Slot>
        <Slot><AlarmClock /></Slot>
        <Slot $mark="dot"><Folder /></Slot>
        <Slot $mark="dot"><Edge /></Slot>
        <Slot><Calc /></Slot>
        <Slot $mark="dot"><Ring /></Slot>
        <Slot $mark="dot"><MindApp /></Slot>
        <Slot $mark="dot"><Orange /></Slot>
        <Slot $mark="bar" $active><Drop /></Slot>
        <Slot $mark="brown"><Player /></Slot>
        <Slot $mark="dot"><Wechat /></Slot>
        <Tray>
          <TrayCell $w={34}><Stroke $c="#333" $w={1.5} $s={14} viewBox="0 0 14 14"><path d="M1 10l6-6 6 6" /></Stroke></TrayCell>
          <TrayCell $w={14}><Stroke $c="#222" $w={2} viewBox="0 0 16 16"><path d="M2 5h12M2 11h12M10 3v4M6 9v4" /></Stroke></TrayCell>
          <TrayCell $w={32}><TaskSvg viewBox="0 0 16 16" $s={16}><path d="M2 15V5M6 15V6l3.500 5 3.500-5v9" stroke="#222" strokeWidth="2" fill="none" /><circle cx="13.500" cy="3" r="2.500" fill="#c04848" /></TaskSvg></TrayCell>
          <TrayCell $w={18}><TaskSvg viewBox="0 0 16 16" $s={16}><rect width="16" height="16" rx="2" fill="#2f8fdc" /><path d="M9 1L4 9h3l-1 6 6-8H9z" fill="#e8f6ff" /></TaskSvg></TrayCell>
          <TrayCell $w={38}><Stroke $c="#555" viewBox="0 0 16 16"><rect x="5.500" y="1" width="5" height="9" rx="2.500" /><path d="M3 8a5 5 0 0 0 10 0M8 13v2" /></Stroke></TrayCell>
          <TrayCell $w={28}><ImeChar>中</ImeChar></TrayCell>
          <TrayCell $w={46}><TaskSvg viewBox="0 0 16 16" $s={16}><rect width="16" height="16" rx="4" fill="#f0b89a" /><path d="M12 4H6a2 2 0 0 0 0 4h4a2 2 0 0 1 0 4H4" stroke="#d8521e" strokeWidth="2.500" fill="none" /></TaskSvg></TrayCell>
          <TrayCell $w={30}><Stroke $c="#333" viewBox="0 0 16 16"><path d="M11 3H1v9h13V8M7 12v3M4 15h6" /><rect x="11.500" y="1" width="3" height="5" rx="1" /></Stroke></TrayCell>
          <TrayCell $w={18}><Stroke $c="#444" $w={1.1} viewBox="0 0 16 16"><path d="M2 6v4h2l3 3V3L4 6zM10 5a4 4 0 0 1 0 6M12 3a7 7 0 0 1 0 10" /></Stroke></TrayCell>
          <TrayCell $w={30}><TaskSvg viewBox="0 0 16 16" $s={16}><rect x="1" y="4" width="13" height="9" rx="1" fill="#333" /><rect x="14" y="7" width="2" height="3" fill="#333" /><path d="M3 1l3 3" stroke="#333" /></TaskSvg></TrayCell>
          <Clock>20</Clock>
        </Tray>
      </Taskbar>
    </Page>
  );
}
